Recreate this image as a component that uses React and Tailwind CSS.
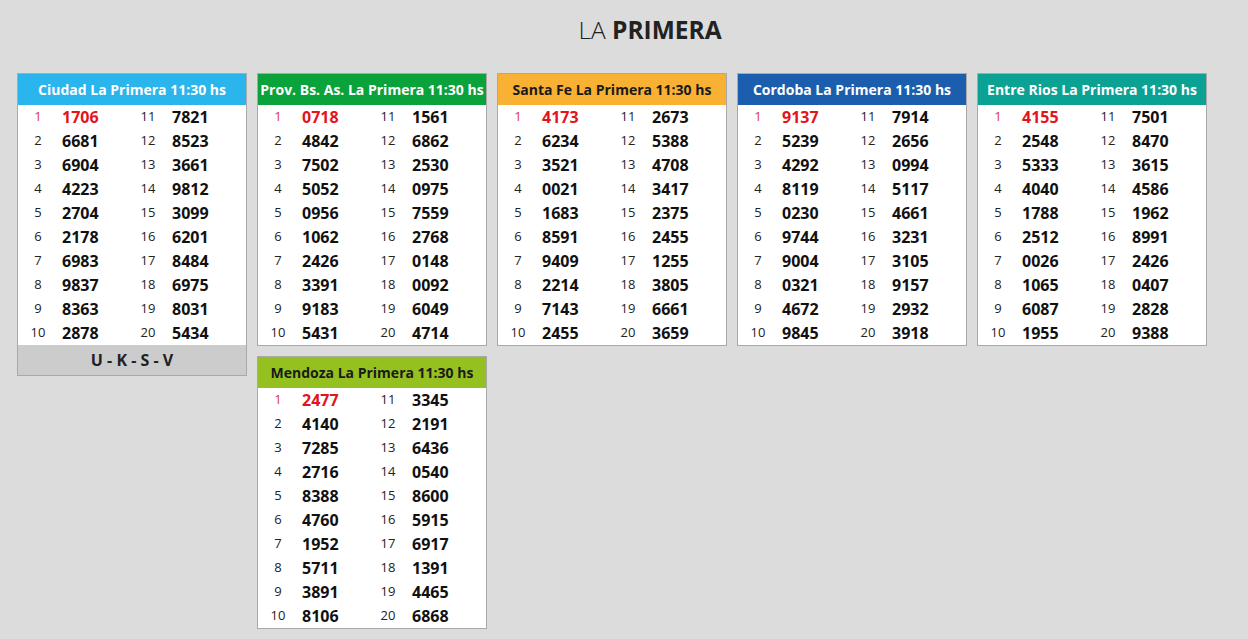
const cards = [
  {
    title: "Ciudad La Primera 11:30 hs",
    head: "bg-[#2bb5ed] text-white",
    nums: ["1706", "6681", "6904", "4223", "2704", "2178", "6983", "9837", "8363", "2878", "7821", "8523", "3661", "9812", "3099", "6201", "8484", "6975", "8031", "5434"],
    footer: "U - K - S - V",
  },
  {
    title: "Prov. Bs. As. La Primera 11:30 hs",
    head: "bg-[#0aa23a] text-white",
    nums: ["0718", "4842", "7502", "5052", "0956", "1062", "2426", "3391", "9183", "5431", "1561", "6862", "2530", "0975", "7559", "2768", "0148", "0092", "6049", "4714"],
  },
  {
    title: "Santa Fe La Primera 11:30 hs",
    head: "bg-[#f8b133] text-[#1a1a1a]",
    nums: ["4173", "6234", "3521", "0021", "1683", "8591", "9409", "2214", "7143", "2455", "2673", "5388", "4708", "3417", "2375", "2455", "1255", "3805", "6661", "3659"],
  },
  {
    title: "Cordoba La Primera 11:30 hs",
    head: "bg-[#1c5eae] text-white",
    nums: ["9137", "5239", "4292", "8119", "0230", "9744", "9004", "0321", "4672", "9845", "7914", "2656", "0994", "5117", "4661", "3231", "3105", "9157", "2932", "3918"],
  },
  {
    title: "Entre Rios La Primera 11:30 hs",
    head: "bg-[#0ba293] text-white",
    nums: ["4155", "2548", "5333", "4040", "1788", "2512", "0026", "1065", "6087", "1955", "7501", "8470", "3615", "4586", "1962", "8991", "2426", "0407", "2828", "9388"],
  },
  {
    title: "Mendoza La Primera 11:30 hs",
    head: "bg-[#94c11f] text-[#1a1a1a]",
    nums: ["2477", "4140", "7285", "2716", "8388", "4760", "1952", "5711", "3891", "8106", "3345", "2191", "6436", "0540", "8600", "5915", "6917", "1391", "4465", "6868"],
  },
];

function Card({ card, className = "" }) {
  const rows = [];
  for (let i = 0; i < 10; i++) rows.push(i);
  return (
    <div className={`w-[230px] border border-[#a9a9a9] bg-white self-start ${className}`}>
      <div className={`h-[31px] flex items-center justify-center text-[14px] font-bold whitespace-nowrap ${card.head}`}>
        {card.title}
      </div>
      <div>
        {rows.map((i) => (
          <div key={i} className="grid grid-cols-[40px_70px_40px_1fr] h-[24px] items-center">
            <span className={`text-center text-[13px] ${i === 0 ? "text-[#e0334a]" : "text-[#222]"}`}>{i + 1}</span>
            <span className={`pl-1 text-[16px] font-bold ${i === 0 ? "text-[#e3141c]" : "text-[#111]"}`}>{card.nums[i]}</span>
            <span className="text-center text-[13px] text-[#222]">{i + 11}</span>
            <span className="pl-1 text-[16px] font-bold text-[#111]">{card.nums[i + 10]}</span>
          </div>
        ))}
      </div>
      {card.footer && (
        <div className="h-[30px] bg-[#cccccc] flex items-center justify-center text-[16px] font-bold text-[#222]">
          {card.footer}
        </div>
      )}
    </div>
  );
}

export default function App() {
  return (
    <div className="min-h-[639px] bg-[#dcdcdc] font-['Open_Sans',sans-serif] text-[#222]">
      <h1 className="pt-[13px] pl-[52px] text-center text-[24.5px] leading-[34px] text-[#222]">
        <span className="font-light">LA </span>
        <span className="font-bold">PRIMERA</span>
      </h1>
      <div className="mt-[26px] pl-[17px] grid grid-cols-[repeat(5,230px)] gap-[10px]">
        <Card card={cards[0]} className="row-span-2" />
        <Card card={cards[1]} />
        <Card card={cards[2]} />
        <Card card={cards[3]} />
        <Card card={cards[4]} />
        <Card card={cards[5]} />
      </div>
    </div>
  );
}
